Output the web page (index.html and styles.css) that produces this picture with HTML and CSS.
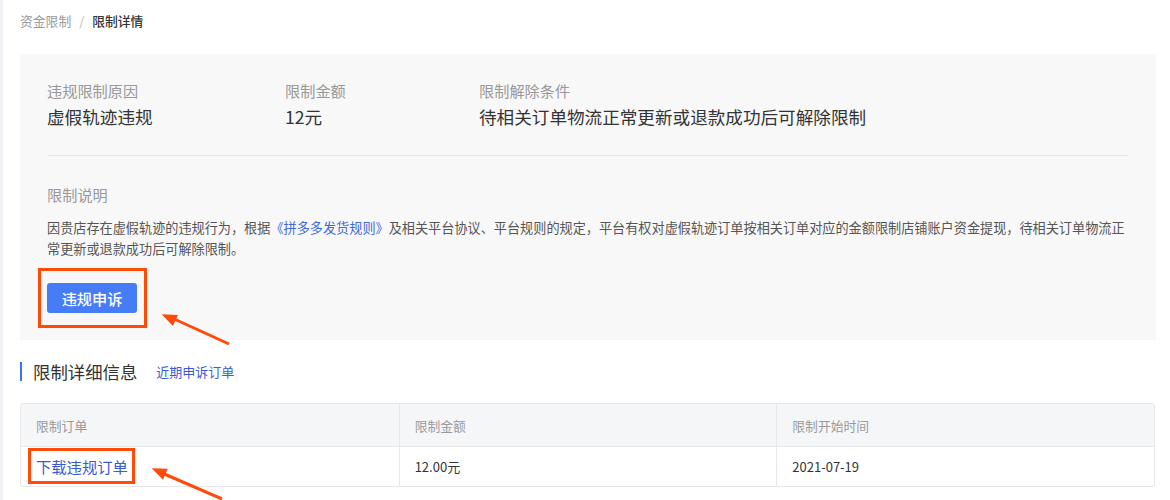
FILE: index.html
```html
<!DOCTYPE html>
<html lang="zh-CN">
<head>
<meta charset="utf-8">
<title>限制详情</title>
<link rel="stylesheet" href="styles.css">
</head>
<body>
<div class="page">
  <nav class="crumbs">
    <span class="crumb">资金限制</span>
    <span class="sep">/</span>
    <span class="crumb current">限制详情</span>
  </nav>

  <section class="panel">
    <div class="facts">
      <div class="fact">
        <div class="fact-label">违规限制原因</div>
        <div class="fact-value">虚假轨迹违规</div>
      </div>
      <div class="fact">
        <div class="fact-label">限制金额</div>
        <div class="fact-value">12元</div>
      </div>
      <div class="fact">
        <div class="fact-label">限制解除条件</div>
        <div class="fact-value">待相关订单物流正常更新或退款成功后可解除限制</div>
      </div>
    </div>
    <div class="divider"></div>
    <div class="fact-label">限制说明</div>
    <p class="desc">因贵店存在虚假轨迹的违规行为，根据<span class="rule-link">《拼多多发货规则》</span>及相关平台协议、平台规则的规定，平台有权对虚假轨迹订单按相关订单对应的金额限制店铺账户资金提现，待相关订单物流正常更新或退款成功后可解除限制。</p>
    <div class="action">
      <span class="mark mark-btn"></span>
      <button class="btn-primary">违规申诉</button>
    </div>
  </section>

  <div class="section-head">
    <h2 class="section-title">限制详细信息</h2>
    <a class="section-link">近期申诉订单</a>
  </div>

  <table class="orders">
    <thead>
      <tr><th>限制订单</th><th>限制金额</th><th>限制开始时间</th></tr>
    </thead>
    <tbody>
      <tr>
        <td><span class="dl-wrap"><span class="mark mark-link"></span><a class="dl-link">下载违规订单</a></span></td>
        <td>12.00元</td>
        <td>2021-07-19</td>
      </tr>
    </tbody>
  </table>

  <svg class="arrows" width="1170" height="500" viewBox="0 0 1170 500" aria-hidden="true">
    <line x1="229" y1="344" x2="172" y2="318" stroke="#ff4a0a" stroke-width="3"/>
    <polygon points="161.7,314.3 177.9,315.0 172.9,326.0" fill="#ff4a0a"/>
    <line x1="222" y1="499" x2="162" y2="473" stroke="#ff4a0a" stroke-width="3"/>
    <polygon points="151.7,468.3 167.8,468.8 163.0,479.8" fill="#ff4a0a"/>
  </svg>
</div>
</body>
</html>
```

FILE: styles.css
```css
* { box-sizing: border-box; }

html, body {
  margin: 0;
  padding: 0;
  background: #ffffff;
}

body {
  font-family: "Noto Sans CJK SC", "Noto Sans", "Liberation Sans", sans-serif;
  color: #333;
  width: 1170px;
  height: 500px;
  overflow: hidden;
}

.page {
  position: relative;
  min-height: 500px;
  border-left: 3px solid #eff1f4;
  padding: 12px 14px 0 17px;
}

.crumbs {
  display: flex;
  align-items: center;
  height: 18px;
  font-size: 12.8px;
  line-height: 18px;
}

.crumb { color: #999; }
.crumb.current { color: #333; font-weight: 500; }
.sep { color: #bbb; margin: 0 8px 0 8px; }

.panel {
  margin-top: 24px;
  background: #f8f8f8;
  padding: 26px 27px 27px 27px;
}

.facts {
  display: grid;
  grid-template-columns: 238px 194px 1fr;
}

.fact-label {
  font-size: 15.2px;
  line-height: 20px;
  color: #999;
}

.fact-value {
  margin-top: 5px;
  font-size: 17.6px;
  line-height: 24px;
  color: #333;
}

.divider {
  height: 1px;
  background: #e9e9e9;
  margin: 26px 0 28px 0;
}

.desc {
  margin: 14px 0 0 0;
  font-size: 13.15px;
  line-height: 20.5px;
  color: #555;
}

.rule-link { color: #3f6ad8; }

.action {
  position: relative;
  display: flex;
  margin-top: 24px;
}

.btn-primary {
  height: 30px;
  width: 90px;
  padding: 0;
  border: none;
  border-radius: 3px;
  background: #467cf6;
  color: #fff;
  font-family: inherit;
  font-size: 15.2px;
  font-weight: 500;
  line-height: 30px;
}

.mark {
  position: absolute;
  border: 3px solid #ff4a0a;
}

.mark-btn {
  left: -9px;
  top: -15px;
  width: 109px;
  height: 60px;
}

.section-head {
  display: flex;
  align-items: center;
  margin-top: 22px;
  height: 19px;
  border-left: 2px solid #3f72f0;
  padding-left: 11px;
}

.section-title {
  margin: 0;
  font-size: 17.4px;
  line-height: 19px;
  font-weight: 400;
  color: #333;
}

.section-link {
  margin-left: 19px;
  font-size: 13px;
  color: #3d5bd0;
}

.orders {
  margin-top: 22px;
  width: 1135px;
  border-collapse: separate;
  border-spacing: 0;
  border: 1px solid #e8e8e8;
  border-radius: 3px;
  table-layout: fixed;
}

.orders th,
.orders td {
  text-align: left;
  padding: 0 0 0 15px;
  font-weight: 400;
}

.orders th {
  height: 43px;
  background: #f5f6f8;
  color: #999;
  font-size: 12.8px;
  border-bottom: 1px solid #e8e8e8;
}

.orders td {
  height: 39px;
  font-size: 13px;
  color: #333;
}

.orders th + th,
.orders td + td {
  border-left: 1px solid #e8e8e8;
}

.dl-wrap {
  position: relative;
  display: inline-block;
  line-height: 22px;
}

.dl-link {
  font-size: 15.3px;
  color: #3d5bd0;
}

.mark-link {
  left: -8px;
  top: -7px;
  width: 107px;
  height: 36px;
}

.arrows {
  position: absolute;
  left: -3px;
  top: 0;
  pointer-events: none;
}
```
